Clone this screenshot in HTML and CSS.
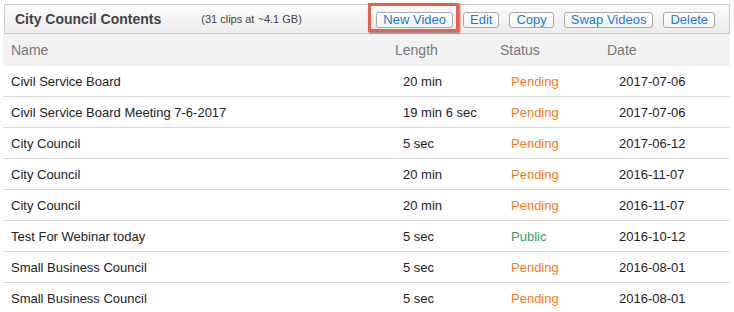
FILE: index.html
```html
<!DOCTYPE html>
<html>
<head>
<meta charset="utf-8">
<link rel="stylesheet" href="styles.css">
</head>
<body>
<div class="page">
  <div class="panel-head">
    <h1 class="title">City Council Contents</h1>
    <span class="meta">(31 clips at ~4.1 GB)</span>
    <div class="actions">
      <span class="highlight-wrap">
        <button class="btn">New Video</button>
        <span class="highlight"></span>
      </span>
      <button class="btn">Edit</button>
      <button class="btn">Copy</button>
      <button class="btn">Swap Videos</button>
      <button class="btn">Delete</button>
    </div>
  </div>
  <div class="table">
    <div class="row head">
      <div class="c name">Name</div>
      <div class="c len">Length</div>
      <div class="c status">Status</div>
      <div class="c date">Date</div>
    </div>
    <div class="row">
      <div class="c name">Civil Service Board</div>
      <div class="c len">20 min</div>
      <div class="c status pending">Pending</div>
      <div class="c date">2017-07-06</div>
    </div>
    <div class="row">
      <div class="c name">Civil Service Board Meeting 7-6-2017</div>
      <div class="c len">19 min 6 sec</div>
      <div class="c status pending">Pending</div>
      <div class="c date">2017-07-06</div>
    </div>
    <div class="row">
      <div class="c name">City Council</div>
      <div class="c len">5 sec</div>
      <div class="c status pending">Pending</div>
      <div class="c date">2017-06-12</div>
    </div>
    <div class="row">
      <div class="c name">City Council</div>
      <div class="c len">20 min</div>
      <div class="c status pending">Pending</div>
      <div class="c date">2016-11-07</div>
    </div>
    <div class="row">
      <div class="c name">City Council</div>
      <div class="c len">20 min</div>
      <div class="c status pending">Pending</div>
      <div class="c date">2016-11-07</div>
    </div>
    <div class="row">
      <div class="c name">Test For Webinar today</div>
      <div class="c len">5 sec</div>
      <div class="c status public">Public</div>
      <div class="c date">2016-10-12</div>
    </div>
    <div class="row">
      <div class="c name">Small Business Council</div>
      <div class="c len">5 sec</div>
      <div class="c status pending">Pending</div>
      <div class="c date">2016-08-01</div>
    </div>
    <div class="row">
      <div class="c name">Small Business Council</div>
      <div class="c len">5 sec</div>
      <div class="c status pending">Pending</div>
      <div class="c date">2016-08-01</div>
    </div>
  </div>
</div>
</body>
</html>
```
FILE: styles.css
```css
html, body {
  margin: 0;
  padding: 0;
  background: #fff;
  font-family: "Liberation Sans", Arial, Helvetica, sans-serif;
  color: #222;
}
.page {
  padding: 4px 4px 0 3px;
}
.panel-head {
  display: flex;
  align-items: center;
  height: 28px;
  margin-left: 1px;
  border: 1px solid #c9c9c9;
  background: linear-gradient(#fbfbfb, #ececec);
}
.title {
  margin: 0 0 0 10px;
  font-size: 14px;
  font-weight: bold;
  color: #444;
}
.meta {
  margin-left: 40px;
  font-size: 11px;
  color: #444;
}
.actions {
  margin-left: auto;
  margin-right: 14px;
  padding-top: 2px;
  display: flex;
  align-items: center;
  gap: 10px;
}
.highlight-wrap {
  position: relative;
  display: flex;
}
.highlight {
  position: absolute;
  left: -8px;
  top: -9px;
  right: -6px;
  bottom: -4px;
  border: 3px solid #e5604d;
  box-shadow: 1px 1px 2px rgba(0,0,0,0.55);
  pointer-events: none;
}
.btn {
  height: 16px;
  padding: 0 6px;
  border: 1px solid #a8a8a8;
  border-radius: 3px;
  background: linear-gradient(#ffffff, #f4f4f4);
  font-family: "Liberation Sans", Arial, Helvetica, sans-serif;
  font-size: 13px;
  line-height: 14px;
  color: #1b7bd0;
}
.table {
  font-size: 13px;
}
.row {
  display: grid;
  grid-template-columns: 392px 105px 107px 1fr;
  height: 30px;
  align-items: center;
  border-bottom: 1px solid #dadada;
}
.row.head {
  height: 32px;
  background: #f2f2f2;
  border-bottom: none;
  color: #777;
  font-size: 14px;
}
.c.name { padding-left: 8px; }
.row .len { padding-left: 8px; }
.row .status { padding-left: 11px; }
.row .date { padding-left: 12px; }
.row.head .len, .row.head .status, .row.head .date { padding-left: 0; }
.pending { color: #f47b20; }
.public { color: #3b9a6b; }
```
